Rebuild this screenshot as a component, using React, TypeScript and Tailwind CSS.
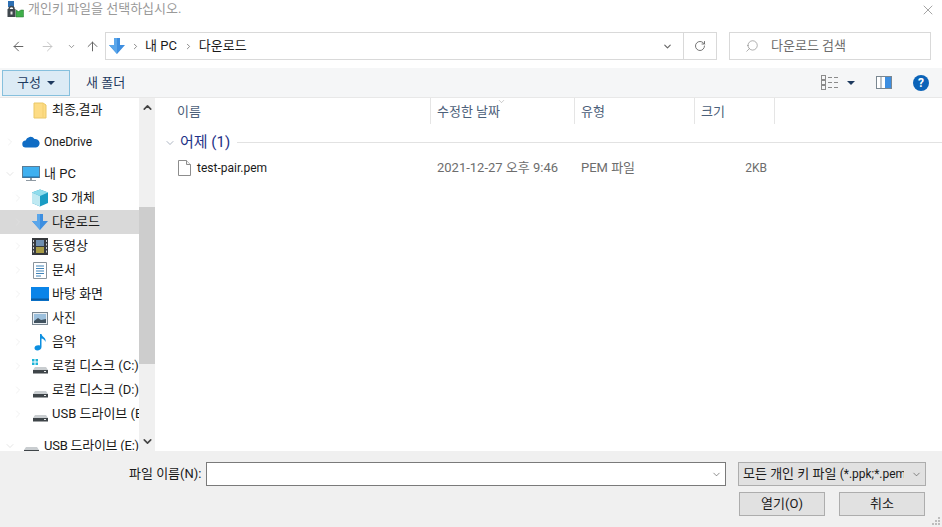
import { ChevronDown, ChevronRight, ChevronUp, RotateCw, ArrowLeft, ArrowRight, ArrowUp, Search, X } from "lucide-react";

const FONT = "font-['Roboto','Noto_Sans_CJK_KR',sans-serif]";

const DownArrow = ({ size = 18 }: { size?: number }) => (
  <svg width={size} height={size} viewBox="0 0 18 18">
    <path d="M6 1h6v7h5l-8 9-8-9h5z" fill="#3d8ee0" />
    <path d="M6 1h3v16l-8-9h5z" fill="#5aa6ea" />
  </svg>
);

const FolderIcon = () => (
  <svg width={14} height={17} viewBox="0 0 14 17">
    <path d="M1 1h9l3 2v13H1z" fill="#fddc85" stroke="#e9c766" />
    <path d="M10 1v14" stroke="#f4cf6e" />
  </svg>
);

const CloudIcon = () => (
  <svg width={18} height={12} viewBox="0 0 18 12">
    <path d="M4 11.5a3.5 3.5 0 0 1-.4-7A5 5 0 0 1 12.5 3a4 4 0 0 1 1.5 8.500z" fill="#0f6cc4" />
  </svg>
);

const PcIcon = () => (
  <svg width={18} height={16} viewBox="0 0 18 16">
    <rect x="0.5" y="0.5" width="17" height="11" fill="#3fb0f0" stroke="#5b7c95" />
    <path d="M1 11h16" stroke="#1d6ca8" />
    <path d="M8 12h2v2H8z" fill="#8f9aa3" />
    <path d="M4 14.500h10" stroke="#8f9aa3" />
  </svg>
);

const CubeIcon = () => (
  <svg width={18} height={18} viewBox="0 0 18 18">
    <path d="M9 0.500 17 3.500v10.500L9 17.500 1 14V3.500z" fill="#1a9cc4" />
    <path d="M9 0.500 17 3.500 9 7 1 3.500z" fill="#8fdcec" />
    <path d="M1 3.500 9 7v10.500L1 14z" fill="#bfe9f2" />
  </svg>
);

const FilmIcon = () => (
  <svg width={16} height={17} viewBox="0 0 16 17">
    <rect width="16" height="17" fill="#36393d" />
    <rect x="4" y="2" width="8" height="6" fill="#6f8fb0" />
    <rect x="4" y="9" width="8" height="6" fill="#a89c46" />
    <path d="M1.500 2v13M14.500 2v13" stroke="#cfd2d6" strokeDasharray="2 1.500" />
  </svg>
);

const DocIcon = () => (
  <svg width={14} height={17} viewBox="0 0 14 17">
    <path d="M.5.5h13v16H.5z" fill="#fff" stroke="#8a949c" />
    <path d="M3 4h8M3 6.500h8M3 9h8M3 11.500h8M3 14h5" stroke="#3f83b8" />
  </svg>
);

const DesktopIcon = () => (
  <svg width={18} height={14} viewBox="0 0 18 14">
    <rect width="18" height="14" fill="#0a84e8" />
    <path d="M0 12.500h18" stroke="#0b5aa0" strokeWidth="2" />
  </svg>
);

const PhotoIcon = () => (
  <svg width={16} height={13} viewBox="0 0 16 13">
    <rect x=".5" y=".5" width="15" height="12" fill="#e9eef2" stroke="#7a8791" />
    <rect x="2" y="2" width="12" height="9" fill="#9cc0dd" />
    <path d="M2 9l4-3 3 2 5-1v4H2z" fill="#41525f" />
  </svg>
);

const NoteIcon = () => (
  <svg width={13} height={18} viewBox="0 0 13 18">
    <path d="M6 1h1.500c.5 3 5 3.500 4 8-.8-2.500-2.500-3.200-4-3.500V14c0 2.200-2 3.500-4.200 3.500C1.500 17.500.5 16.500.5 15c0-1.800 2-3.200 5.500-2.500z" fill="#0c8fe0" />
  </svg>
);

const DriveIcon = ({ win }: { win?: boolean }) => (
  <svg width={17} height={15} viewBox="0 0 17 15">
    {win && (
      <g fill="#1db4d8">
        <rect x="0" y="0" width="2.500" height="2.500" />
        <rect x="3.500" y="0" width="2.500" height="2.500" />
        <rect x="0" y="3.500" width="2.500" height="2.500" />
        <rect x="3.500" y="3.500" width="2.500" height="2.500" />
      </g>
    )}
    <path d="M3 8h11l2 3H1z" fill="#c9cdd0" />
    <rect x="1" y="11" width="15" height="3.500" fill="#3f4549" />
    <rect x="12" y="12" width="2" height="1" fill="#e8eaeb" />
  </svg>
);

const TitleIcon = () => (
  <svg width={17} height={17} viewBox="0 0 17 17">
    <rect x="1" y="0" width="6" height="6" fill="#2c6fb3" />
    <path d="M2 8a2.500 2.500 0 0 1 5 0" fill="none" stroke="#3f474d" strokeWidth="1.500" />
    <rect x="0.500" y="8" width="8" height="8" fill="#3f474d" />
    <rect x="3.500" y="10.500" width="2" height="3" fill="#e8e8e8" />
    <path d="M9 9l2.500 1.500L14 9h2.500v7H9z" fill="#3fae49" stroke="#23752c" strokeWidth=".5" />
  </svg>
);

const FileIcon = () => (
  <svg width={13} height={16} viewBox="0 0 13 16">
    <path d="M.5.500h8l4 4v11H.500z" fill="#fff" stroke="#8d8d8d" />
    <path d="M8.500.500v4h4" fill="#f1f1f1" stroke="#8d8d8d" />
  </svg>
);

const ViewsIcon = () => (
  <svg width={17} height={15} viewBox="0 0 17 15">
    <g fill="none" stroke="#8b8b8b">
      <rect x=".5" y=".5" width="4" height="4" />
      <rect x=".5" y="5.500" width="4" height="4" />
      <rect x=".5" y="10.500" width="4" height="4" />
      <path d="M7 2.500h4M13 2.500h4M7 7.500h4M13 7.500h4M7 12.500h4M13 12.500h4" />
    </g>
  </svg>
);

const PaneIcon = () => (
  <svg width={16} height={13} viewBox="0 0 16 13">
    <rect x=".5" y=".5" width="15" height="12" fill="#fff" stroke="#7a8791" />
    <rect x="9" y="1" width="6" height="11" fill="#3d8ee0" />
    <path d="M5 1v11" stroke="#7a8791" />
  </svg>
);

const Caret = () => (
  <span className="w-0 h-0 border-x-[4px] border-x-transparent border-t-[4px] border-t-[#1e3a5f]" />
);

type TreeRow = {
  label: string;
  icon: React.ReactNode;
  depth: 0 | 1;
  open?: boolean;
  selected?: boolean;
  gapBefore?: boolean;
  latin?: boolean;
  noChevron?: boolean;
  tight?: boolean;
};

const rows: TreeRow[] = [
  { label: "최종,결과", icon: <FolderIcon />, depth: 1, noChevron: true },
  { label: "OneDrive", icon: <CloudIcon />, depth: 0, gapBefore: true, latin: true },
  { label: "내 PC", icon: <PcIcon />, depth: 0, open: true, gapBefore: true },
  { label: "3D 개체", icon: <CubeIcon />, depth: 1 },
  { label: "다운로드", icon: <DownArrow />, depth: 1, selected: true },
  { label: "동영상", icon: <FilmIcon />, depth: 1 },
  { label: "문서", icon: <DocIcon />, depth: 1 },
  { label: "바탕 화면", icon: <DesktopIcon />, depth: 1 },
  { label: "사진", icon: <PhotoIcon />, depth: 1 },
  { label: "음악", icon: <NoteIcon />, depth: 1 },
  { label: "로컬 디스크 (C:)", icon: <DriveIcon win />, depth: 1 },
  { label: "로컬 디스크 (D:)", icon: <DriveIcon />, depth: 1 },
  { label: "USB 드라이브 (E:)", icon: <DriveIcon />, depth: 1 },
  { label: "USB 드라이브 (E:)", icon: <DriveIcon />, depth: 0, open: true, gapBefore: true, tight: true },
];

const Tree = () => (
  <div className="w-[139px] shrink-0 overflow-hidden">
    {rows.map((row, i) => (
      <div
        key={i}
        className={`h-6 flex items-center whitespace-nowrap text-[#1a1a1a] ${row.latin ? "text-[12px]" : "text-[13px]"} ${row.tight ? "tracking-[-0.25px]" : ""} ${row.gapBefore ? "mt-2" : ""} ${row.selected ? "bg-[#d9d9d9]" : ""} ${row.depth === 1 ? "pl-[12px]" : "pl-[4px]"}`}
      >
        <span className={`${row.depth === 1 ? "w-[19px]" : "w-[18px]"} shrink-0 flex`}>
          {row.open ? (
            <ChevronDown size={12} strokeWidth={1} color="#c8c8c8" />
          ) : row.noChevron ? null : (
            <ChevronRight size={12} strokeWidth={1} color="#e2e2e2" />
          )}
        </span>
        <span className="w-[18px] shrink-0 flex justify-center">{row.icon}</span>
        <span className={row.depth === 1 ? "ml-[3px]" : "ml-[4px]"}>{row.label}</span>
      </div>
    ))}
  </div>
);

const Scrollbar = () => (
  <div className="w-4 shrink-0 bg-[#f0f0f0] flex flex-col items-stretch">
    <div className="h-[18px] flex items-center justify-center">
      <ChevronUp size={13} strokeWidth={3} color="#444" />
    </div>
    <div className="h-[91px]" />
    <div className="h-[157px] bg-[#cdcdcd]" />
    <div className="flex-1" />
    <div className="h-[17px] mb-[1px] flex items-center justify-center">
      <ChevronDown size={13} strokeWidth={3} color="#444" />
    </div>
  </div>
);

const columns = [
  { label: "이름", width: "w-[275px]", pad: "pl-[21px]" },
  { label: "수정한 날짜", width: "w-[144px]", pad: "pl-[6px]" },
  { label: "유형", width: "w-[120px]", pad: "pl-[6px]" },
  { label: "크기", width: "w-[80px]", pad: "pl-[6px]" },
];

const FileList = () => (
  <div className="flex-1 min-w-0 pl-[1px]">
    <div className="h-[26px] flex text-[13px] text-[#4c607a]">
      {columns.map((col, i) => (
        <div key={col.label} className={`relative ${col.width} ${col.pad} pt-[1px] border-r border-[#e5e5e5] flex items-center`}>
          {col.label}
          {i === 1 && (
            <span className="absolute left-[66px] -top-[1px]">
              <ChevronDown size={9} strokeWidth={1} color="#777" />
            </span>
          )}
        </div>
      ))}
    </div>
    <div className="h-[37px] flex items-center pl-[8px]">
      <ChevronDown size={12} strokeWidth={1} color="#5a6b85" />
      <span className="ml-1 text-[15px] text-[#1e3287]">어제 (1)</span>
      <span className="ml-[7px] flex-1 h-px bg-[#e2e2e2]" />
    </div>
    <div className="h-6 -mt-[5px] flex items-center text-[13px] text-[#6d6d6d]">
      <div className="w-[275px] pl-[22px] flex items-center">
        <FileIcon />
        <span className="ml-[6px] text-[12px] text-[#1a1a1a]">test-pair.pem</span>
      </div>
      <div className="w-[144px] pl-[6px] whitespace-nowrap">2021-12-27 오후 9:46</div>
      <div className="w-[120px] pl-[6px]">PEM 파일</div>
      <div className="w-[72px] text-right text-[12px]">2KB</div>
    </div>
  </div>
);

export default function App() {
  return (
    <div className={`${FONT} w-[942px] h-[527px] bg-white flex flex-col overflow-hidden`}>
      {/* title */}
      <div className="h-8 shrink-0 flex items-start pt-[1px] pl-[7px] pr-[6px]">
        <TitleIcon />
        <span className="ml-[4px] text-[13px] leading-[16px] text-[#9a9a9a]">개인키 파일을 선택하십시오.</span>
        <X size={16} strokeWidth={1} color="#777" className="ml-auto mt-[1px]" />
      </div>

      {/* nav */}
      <div className="h-7 shrink-0 flex items-center pl-[11px] pr-[11px]">
        <ArrowLeft size={15} strokeWidth={1.6} color="#666" />
        <ArrowRight size={15} strokeWidth={1.6} color="#c6c6c6" className="ml-[14px]" />
        <ChevronDown size={9} strokeWidth={2} color="#777" className="ml-[12px]" />
        <ArrowUp size={15} strokeWidth={1.6} color="#666" className="ml-[9px]" />
        <div className="ml-[5px] w-[612px] h-7 border border-[#d9d9d9] flex items-center text-[13px] text-[#1a1a1a]">
          <span className="ml-[2px]"><DownArrow /></span>
          <ChevronRight size={9} strokeWidth={2} color="#666" className="ml-[5px]" />
          <span className="ml-[5px]">내 PC</span>
          <ChevronRight size={9} strokeWidth={2} color="#666" className="ml-[7px]" />
          <span className="ml-[6px]">다운로드</span>
          <ChevronDown size={11} strokeWidth={2.500} color="#666" className="ml-auto mr-[10px]" />
          <div className="w-[33px] h-full border-l border-[#d9d9d9] flex items-center justify-center">
            <RotateCw size={12} strokeWidth={1.8} color="#666" />
          </div>
        </div>
        <div className="ml-[12px] w-[202px] h-7 border border-[#d9d9d9] flex items-center text-[13px] text-[#6d6d6d]">
          <Search size={14} strokeWidth={1} color="#777" className="ml-[15px] -scale-x-100" />
          <span className="ml-[12px]">다운로드 검색</span>
        </div>
      </div>

      {/* toolbar */}
      <div className="mt-2 h-[30px] shrink-0 bg-[#f5f6f7] border-b border-[#e8e8e8] flex items-center text-[13px] text-[#1e3a5f]">
        <div className="ml-[2px] w-[68px] h-[26px] bg-[#dcebf5] border border-[#86c0dd] flex items-center justify-center gap-[6px]">
          구성 <Caret />
        </div>
        <span className="ml-4">새 폴더</span>
        <span className="ml-auto"><ViewsIcon /></span>
        <span className="ml-[9px] flex"><Caret /></span>
        <span className="ml-[21px] flex"><PaneIcon /></span>
        <span className="ml-[21px] mr-[13px] w-4 h-4 rounded-full bg-[#0b63b8] text-white text-[12px] font-bold flex items-center justify-center">?</span>
      </div>

      {/* body */}
      <div className="flex-1 min-h-0 flex overflow-hidden">
        <Tree />
        <Scrollbar />
        <FileList />
      </div>

      {/* footer */}
      <div className="relative h-[76px] shrink-0 bg-[#f0f0f0] text-[13px] text-[#1a1a1a] pt-[11px]">
        <div className="flex items-center h-6">
          <span className="ml-[129px] w-[77px] whitespace-nowrap">파일 이름(N):</span>
          <div className="w-[520px] h-6 bg-white border border-[#7a7a7a] flex items-center justify-end pr-[3px]">
            <ChevronDown size={11} strokeWidth={1.3} color="#444" />
          </div>
          <div className="ml-[12px] w-[188px] h-6 bg-[#e1e1e1] border border-[#adadad] flex items-center pl-[4px] pr-[3px] overflow-hidden">
            <span className="flex-1 overflow-hidden whitespace-nowrap">
              모든 개인 키 파일 <span className="text-[12px]">(*.ppk;*.pem)</span>
            </span>
            <ChevronDown size={11} strokeWidth={1.3} color="#444" className="shrink-0 ml-[7px]" />
          </div>
        </div>
        <div className="mt-[6px] flex justify-end gap-[14px] pr-[17px]">
          <button className="w-[86px] h-6 bg-[#e1e1e1] border border-[#adadad]">열기(O)</button>
          <button className="w-[86px] h-6 bg-[#e1e1e1] border border-[#adadad]">취소</button>
        </div>
        <svg width={9} height={9} viewBox="0 0 9 9" className="absolute right-[1px] bottom-[1px]" fill="#bdbdbd">
          <rect x="6" y="0" width="2" height="2" />
          <rect x="3" y="3" width="2" height="2" />
          <rect x="6" y="3" width="2" height="2" />
          <rect x="0" y="6" width="2" height="2" />
          <rect x="3" y="6" width="2" height="2" />
          <rect x="6" y="6" width="2" height="2" />
        </svg>
      </div>
    </div>
  );
}
